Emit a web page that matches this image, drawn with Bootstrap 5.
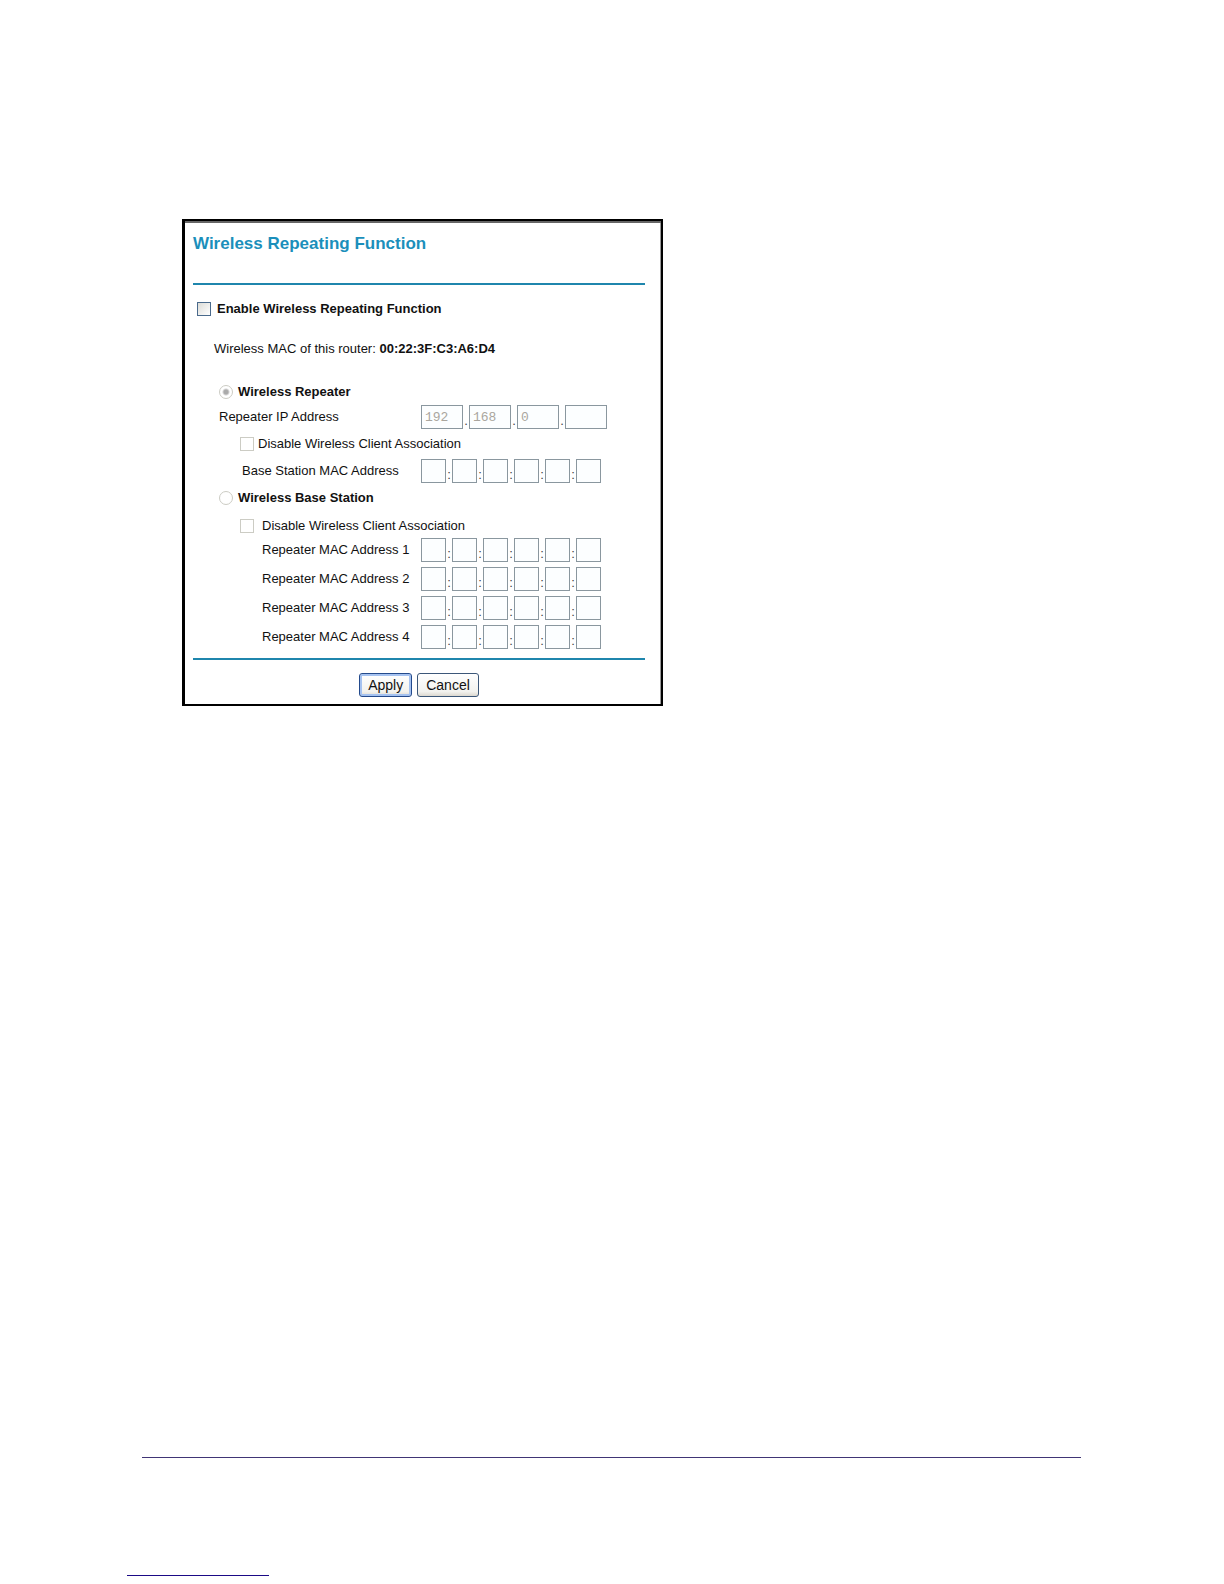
<!DOCTYPE html>
<html lang="en">
<head>
<meta charset="utf-8">
<meta name="viewport" content="width=device-width, initial-scale=1">
<title>Wireless Repeating Function</title>
<link href="https://cdn.jsdelivr.net/npm/bootstrap@5.3.0/dist/css/bootstrap.min.css" rel="stylesheet">
<style>
  body { font-family: "Liberation Sans", Arial, sans-serif; font-size: 13px; line-height: 20px; color: #111; background: #fff; }
  .sheet { padding: 219px 142px 8px 182px; }
  .panel { max-width: 481px; border: solid #000; border-width: 2px 2px 2px 3px; box-shadow: inset 0 2px #666, inset -1px 0 #999; padding: 13px 16px 7px 8px; }
  .panel-title { font-size: 17px; line-height: 20px; color: #1b8fbb; margin: 0; padding-bottom: 29px; font-weight: bold; }
  .rule { border: 0; border-top: 2px solid #1f86ad; opacity: 1; margin: 0; }
  .enable-line { padding: 14px 0 0 4px; gap: 6px; }
  .router-mac { padding: 20px 0 20px 21px; }
  .options { padding-left: 26px; }
  .line { min-height: 26px; }
  .line-short { min-height: 25px; }
  .line-tall { min-height: 30px; }
  .mode { gap: 5px; }
  .sub { padding-left: 21px; }
  .field-name { flex: 0 0 202px; }
  .indent-1 { padding-left: 23px; }
  .indent-2 { padding-left: 43px; }
  .tick, .dot { appearance: none; margin: 0; width: 14px; height: 14px; border: 1px solid #4a6a8c; background: linear-gradient(135deg, #dcdcd7, #fff); flex: none; }
  .tick:disabled, .dot:disabled { border-color: #ccccc4; background: #fff; }
  .dot { border-radius: 50%; }
  .dot:disabled:checked { background: radial-gradient(circle, #aaa 0 2px, #fff 4px); }
  .box { width: 25px; height: 24px; border: 1px solid #8a979f; border-radius: 0; background: #fcfeff; padding: 0 3px; font: 13px "Liberation Mono", monospace; color: #aaa69e; }
  .box-ip { width: 42px; }
  .sep { width: 6px; text-align: center; line-height: 16px; color: #444; }
  .mac-list { gap: 5px; padding-bottom: 9px; }
  .actions { gap: 5px; padding-top: 13px; }
  .xp { height: 24px; padding: 0 8px; border: 1px solid #3c5778; border-radius: 3px; background: linear-gradient(#fff, #f2f2ee 80%, #dcd8cf); font-size: 14px; line-height: 20px; color: #111; }
  .xp-default { border-color: #234a8c; box-shadow: inset 0 0 0 2px #a5c2f0; }
  .foot { padding: 0 143px 8px 127px; }
  .foot-rule { border: 0; border-top: 1px solid #403575; opacity: 1; margin: 0 0 117px 15px; }
  .foot-mark { border: 0; border-top: 1px solid #1b0a86; opacity: 1; width: 142px; margin: 0; }
</style>
</head>
<body class="d-flex flex-column min-vh-100">
<main class="sheet flex-grow-1">
  <form class="panel">
    <h1 class="panel-title">Wireless Repeating Function</h1>
    <hr class="rule">
    <div class="enable-line d-flex align-items-center">
      <input class="tick" type="checkbox" id="enable"><label class="fw-bold" for="enable">Enable Wireless Repeating Function</label>
    </div>
    <div class="router-mac">Wireless MAC of this router: <b>00:22:3F:C3:A6:D4</b></div>
    <div class="options">
      <div class="line mode d-flex align-items-center">
        <input class="dot" type="radio" name="mode" id="repeater" checked disabled><label class="fw-bold" for="repeater">Wireless Repeater</label>
      </div>
      <div class="d-flex align-items-center">
        <label class="field-name" for="ip1">Repeater IP Address</label>
        <div class="d-flex align-items-end">
          <input class="box box-ip" id="ip1" value="192" disabled><span class="sep">.</span>
          <input class="box box-ip" aria-label="IP part 2" value="168" disabled><span class="sep">.</span>
          <input class="box box-ip" aria-label="IP part 3" value="0" disabled><span class="sep">.</span>
          <input class="box box-ip" aria-label="IP part 4" disabled>
        </div>
      </div>
      <div class="line-tall sub d-flex align-items-center gap-1">
        <input class="tick" type="checkbox" id="noassoc1" disabled><label for="noassoc1">Disable Wireless Client Association</label>
      </div>
      <div class="d-flex align-items-center">
        <label class="field-name indent-1" for="base1">Base Station MAC Address</label>
        <div class="d-flex align-items-end" data-mac="base"></div>
      </div>
      <div class="line-tall mode d-flex align-items-center">
        <input class="dot" type="radio" name="mode" id="base" disabled><label class="fw-bold" for="base">Wireless Base Station</label>
      </div>
      <div class="line-short sub d-flex align-items-center gap-2">
        <input class="tick" type="checkbox" id="noassoc2" disabled><label for="noassoc2">Disable Wireless Client Association</label>
      </div>
      <div class="mac-list d-flex flex-column">
        <div class="d-flex align-items-center"><label class="field-name indent-2" for="ra1">Repeater MAC Address 1</label><div class="d-flex align-items-end" data-mac="ra"></div></div>
        <div class="d-flex align-items-center"><label class="field-name indent-2" for="rb1">Repeater MAC Address 2</label><div class="d-flex align-items-end" data-mac="rb"></div></div>
        <div class="d-flex align-items-center"><label class="field-name indent-2" for="rc1">Repeater MAC Address 3</label><div class="d-flex align-items-end" data-mac="rc"></div></div>
        <div class="d-flex align-items-center"><label class="field-name indent-2" for="rd1">Repeater MAC Address 4</label><div class="d-flex align-items-end" data-mac="rd"></div></div>
      </div>
    </div>
    <hr class="rule">
    <div class="actions d-flex justify-content-center">
      <button class="xp xp-default" type="button">Apply</button>
      <button class="xp" type="button">Cancel</button>
    </div>
  </form>
</main>
<footer class="foot">
  <hr class="foot-rule">
  <hr class="foot-mark">
</footer>
<script src="https://cdn.jsdelivr.net/npm/bootstrap@5.3.0/dist/js/bootstrap.bundle.min.js"></script>
<script>
  // Fill each MAC group with six octet fields separated by colons
  document.querySelectorAll('[data-mac]').forEach(function (group) {
    var html = '';
    for (var i = 1; i <= 6; i++) {
      html += (i > 1 ? '<span class="sep">:</span>' : '') +
        '<input class="box" id="' + group.dataset.mac + i + '" aria-label="Octet ' + i + '" maxlength="2" disabled>';
    }
    group.innerHTML = html;
  });
</script>
</body>
</html>
